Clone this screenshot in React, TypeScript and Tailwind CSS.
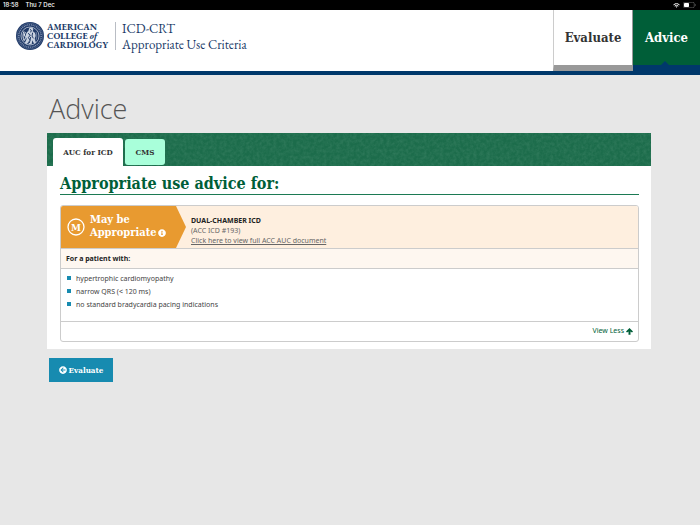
import React from 'react';
import { FaArrowCircleLeft, FaInfoCircle } from 'react-icons/fa';

const criteria = [
  'hypertrophic cardiomyopathy',
  'narrow QRS (< 120 ms)',
  'no standard bradycardia pacing indications',
];

const StatusBar = () => (
  <div className="flex h-[10px] items-center justify-between bg-black pl-[3px] pr-1 font-['Inter',sans-serif] text-[6px] leading-[10px] font-medium text-white">
    <div className="flex gap-[7px]">
      <span>18:58</span>
      <span>Thu 7 Dec</span>
    </div>
    <div className="flex items-center gap-[3px]">
      <svg viewBox="0 0 14 10" className="h-[5px] w-[7px]" fill="none" stroke="white" strokeWidth="2">
        <path d="M1 3.6a8.6 8.6 0 0 1 12 0M3.4 6.2a5.2 5.2 0 0 1 7.2 0" />
        <path d="M5.2 7.6L7 9.6l1.8-2a2.6 2.6 0 0 0-3.6 0z" fill="white" stroke="none" />
      </svg>
      <svg viewBox="0 0 26 12" className="h-[6px] w-[13px]">
        <rect x="0.5" y="0.5" width="22" height="11" rx="3" fill="none" stroke="#8a8a8a" />
        <rect x="2" y="2" width="10" height="8" rx="1.5" fill="white" />
        <path d="M24 4v4c1.5-.6 1.5-3.400 0-4z" fill="#8a8a8a" />
      </svg>
    </div>
  </div>
);

const Seal = () => (
  <svg viewBox="0 0 84 84" className="h-7 w-7 shrink-0">
    <circle cx="42" cy="42" r="42" fill="#203a68" />
    <circle cx="42" cy="42" r="38.500" fill="none" stroke="#8494b2" strokeWidth="1" />
    <circle cx="42" cy="42" r="33.500" fill="none" stroke="#8c9bb8" strokeWidth="4" strokeDasharray="3 2.500" />
    <circle cx="42" cy="42" r="27" fill="#203a68" stroke="#dfe5ee" strokeWidth="2" />
    <path
      d="M40 18c5-3 11-1 12 4l-2 6c6 2 9 8 9 14l-3 8 4 12-6 3-5-10-2 12h-9l1-10-6 9-7-2 6-13-3-8c0-7 3-13 8-16z"
      fill="#c9d2e0"
    />
    <path d="M42 22l4 3-2 6M36 34l7 5-6 8 6 8M50 32l-2 10 4 7M44 45l-4 18" fill="none" stroke="#203a68" strokeWidth="3" />
    <path d="M24 28c-4 9-4 20 1 29M28 30l-3 9 4 7-3 8" fill="none" stroke="#dfe5ee" strokeWidth="3" />
    <path d="M60 30c3 8 3 16 0 24" fill="none" stroke="#8fa0bc" strokeWidth="2" />
  </svg>
);

const Header = () => (
  <header className="flex h-[65px] items-stretch justify-between border-b-4 border-[#00386b] bg-white">
    <div className="flex items-start pt-3 pl-4 font-['EB_Garamond','Liberation_Serif',serif] text-[#203a68]">
      <Seal />
      <div className="pt-px pl-[3px] text-[9px] leading-[9px] font-bold whitespace-nowrap">
        <div>AMERICAN</div>
        <div>
          COLLEGE <i>of</i>
        </div>
        <div>CARDIOLOGY</div>
      </div>
      <div className="ml-[7px] h-7 w-px bg-[#b9bdc4]" />
      <div className="-mt-px pl-[6px] text-[13px] leading-4 whitespace-nowrap">
        <div>ICD-CRT</div>
        <div>Appropriate Use Criteria</div>
      </div>
    </div>
    <nav className="flex font-['Roboto_Slab','DejaVu_Serif_Condensed','DejaVu_Serif',serif] text-[13px] font-bold">
      <a href="#evaluate" className="flex w-20 items-center justify-center border-x border-b-[6px] border-[#999] border-l-[#ccc] bg-white text-[#333]">
        Evaluate
      </a>
      <a href="#advice" className="relative flex w-[67px] items-center justify-center border-b-[6px] border-[#00386b] bg-[#005e38] text-white">
        Advice
        <svg viewBox="0 0 8 4" className="absolute bottom-0 left-7 h-1 w-2">
          <path d="M0 4L4 0l4 4z" fill="#00386b" />
        </svg>
      </a>
    </nav>
  </header>
);

const Grain = () => (
  <svg className="absolute inset-0 h-full w-full opacity-10" aria-hidden="true">
    <filter id="grain">
      <feTurbulence type="fractalNoise" baseFrequency="0.3" numOctaves="4" seed="4" />
      <feColorMatrix values="0 0 0 0 0.7  0 0 0 0 0.9  0 0 0 0 0.8  1.6 0 0 0 -0.5" />
    </filter>
    <rect width="100%" height="100%" filter="url(#grain)" />
  </svg>
);

const Tabs = () => (
  <div className="relative h-[33px] bg-[#1c6c4b]">
    <Grain />
    <div
      role="tablist"
      className="relative flex h-full items-end gap-[2px] pl-[6px] font-['Roboto_Slab','DejaVu_Serif_Condensed','DejaVu_Serif',serif] text-[8px] font-bold text-[#333]"
    >
      <button role="tab" aria-selected="true" className="h-7 w-[70px] rounded-t-[3px] bg-white pb-px">
        AUC for ICD
      </button>
      <button role="tab" aria-selected="false" className="mb-px h-[26px] w-10 rounded-[3px] bg-[#a9ffda] pb-px">
        CMS
      </button>
    </div>
  </div>
);

const AdviceCard = () => (
  <section className="mt-[10px] overflow-hidden rounded-[3px] border border-[#ccc] font-['Noto_Sans','Open_Sans',sans-serif] text-[7px]">
    <div className="flex h-[42px] bg-[#feefdf]">
      <div className="flex w-[115px] items-center gap-[5px] bg-[#e89a30] pl-[6px] text-white">
        <svg viewBox="0 0 18 18" className="h-[18px] w-[18px] shrink-0">
          <circle cx="9" cy="9" r="8" fill="none" stroke="white" strokeWidth="1.300" />
          <text x="9" y="13" textAnchor="middle" fill="white" className="font-['Roboto_Slab','DejaVu_Serif_Condensed',serif] text-[10px] font-bold">
            M
          </text>
        </svg>
        <div className="-mt-[2px] font-['Roboto_Slab','DejaVu_Serif_Condensed','DejaVu_Serif',serif] text-[11px] leading-[13px] font-bold whitespace-nowrap">
          May be
          <div className="flex items-center gap-px">
            Appropriate <FaInfoCircle className="h-2 w-2" />
          </div>
        </div>
      </div>
      <svg viewBox="0 0 10 42" className="h-full w-[10px]" preserveAspectRatio="none">
        <path d="M0 0L10 21L0 42z" fill="#e89a30" />
      </svg>
      <div className="pt-[10px] pl-[5px] leading-[10px] text-[#666]">
        <h3 className="font-bold text-[#222]">DUAL-CHAMBER ICD</h3>
        <p>(ACC ICD #193)</p>
        <a href="#document" className="underline">
          Click here to view full ACC AUC document
        </a>
      </div>
    </div>
    <h4 className="h-[21px] border-y border-[#ccc] bg-[#fef7f0] pl-[5px] leading-[19px] font-bold text-[#222]">
      For a patient with:
    </h4>
    <ul className="h-[52px] pt-[3px] pl-[6px] text-[#444]">
      {criteria.map((item) => (
        <li key={item} className="flex gap-[5px] leading-[13px]">
          <span className="mt-1 h-1 w-1 bg-[#178bb0]" />
          {item}
        </li>
      ))}
    </ul>
    <div className="flex h-5 justify-end border-t border-[#ccc] pr-[5px] text-[#005e38]">
      <button className="flex items-center gap-[2px]">
        View Less
        <svg viewBox="0 0 14 14" className="h-[7px] w-[7px]" fill="currentColor">
          <path d="M7 0L14 7l-2 2.200L9 6.800V13.500H5V6.800L2 9.200 0 7z" />
        </svg>
      </button>
    </div>
  </section>
);

export default function App() {
  return (
    <div className="min-h-screen bg-[#e7e7e7] font-['Open_Sans',sans-serif]">
      <StatusBar />
      <Header />
      <main className="pt-4 pr-[49px] pl-[47px]">
        <h1 className="pl-[2px] text-[27px] leading-9 font-light text-[#555]">Advice</h1>
        <div className="mt-[6px] bg-white">
          <Tabs />
          <div className="pt-2 pr-3 pb-[7px] pl-[13px]">
            <h2 className="border-b border-[#1c7a54] font-['Roboto_Slab','DejaVu_Serif_Condensed','DejaVu_Serif',serif] text-[16px] leading-5 font-bold text-[#005e38]">
              Appropriate use advice for:
            </h2>
            <AdviceCard />
          </div>
        </div>
        <button className="mt-[9px] ml-[2px] flex h-6 w-16 items-center justify-center gap-[2px] bg-[#178bb0] font-['Roboto_Slab','DejaVu_Serif_Condensed','DejaVu_Serif',serif] text-[8px] font-bold text-white">
          <FaArrowCircleLeft className="h-2 w-2" />
          Evaluate
        </button>
      </main>
    </div>
  );
}
